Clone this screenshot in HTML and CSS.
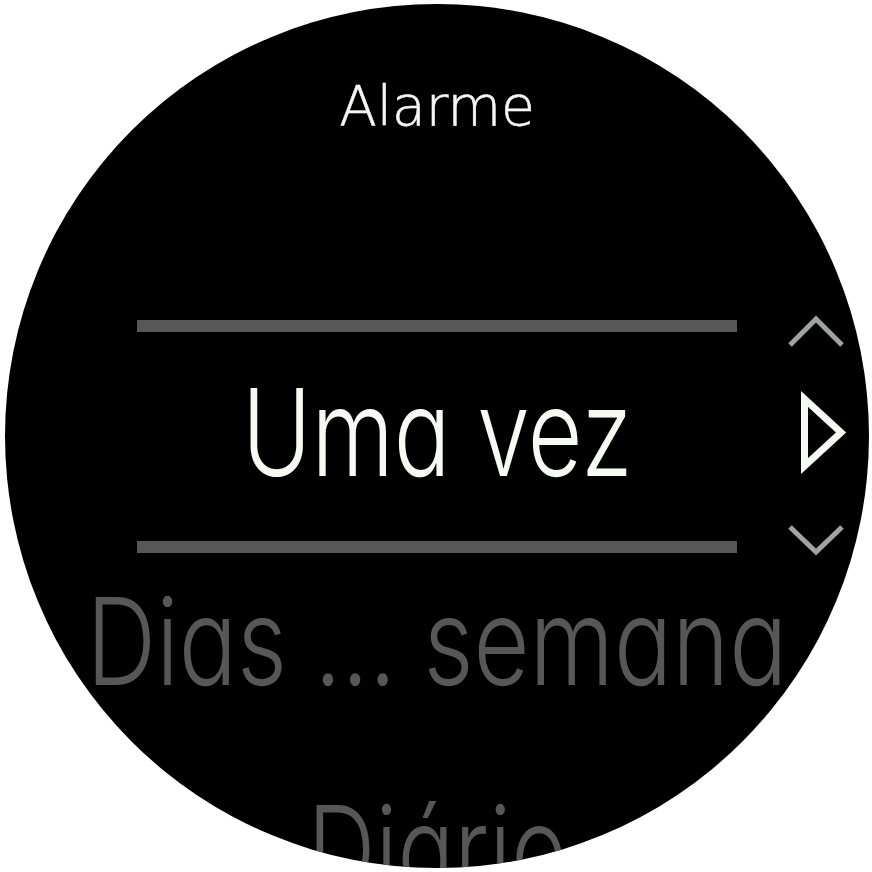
FILE: index.html
```html
<!DOCTYPE html>
<html lang="pt">
<head>
<meta charset="utf-8">
<title>Alarme</title>
<link rel="stylesheet" href="styles.css">
</head>
<body>
<div class="watch">
  <div class="title">Alarme</div>
  <div class="divider divider-top"></div>
  <div class="option option-selected">Uma vez</div>
  <div class="divider divider-bottom"></div>
  <div class="option option-next">Dias ... semana</div>
  <div class="option option-far">Diário</div>
  <svg class="side-nav" viewBox="785 310 70 260" width="70" height="260" aria-hidden="true">
    <polyline points="790,345 816,319 842,345" class="chev"/>
    <polygon points="804.5,399 804.5,466 841,432.5" class="play"/>
    <polyline points="790,527 816,552 842,527" class="chev"/>
  </svg>
</div>
</body>
</html>
```
FILE: styles.css
```css
html, body {
  margin: 0;
  padding: 0;
  background: #ffffff;
}
body {
  width: 872px;
  height: 872px;
  overflow: hidden;
}
.watch {
  position: relative;
  width: 864px;
  height: 864px;
  margin: 4px 0 0 5px;
  border-radius: 50%;
  background: #000000;
  overflow: hidden;
  box-sizing: border-box;
  padding-top: 75px;
  display: flex;
  flex-direction: column;
  align-items: center;
}
.title {
  flex: none;
  height: 55px;
  font-family: "DejaVu Sans", sans-serif;
  font-weight: 200;
  font-size: 55px;
  line-height: 55px;
  color: #f3f9f1;
  white-space: nowrap;
  -webkit-text-stroke: 0.6px #f3f9f1;
}
.divider {
  flex: none;
  width: 600px;
  height: 12px;
  background: #555855;
}
.divider-top { margin-top: 186px; }
.divider-bottom { margin-top: 48px; }
.option {
  flex: none;
  height: 121px;
  font-family: Inter, "Noto Sans", sans-serif;
  font-feature-settings: "cv11" 1;
  font-weight: 300;
  font-size: 121px;
  line-height: 121px;
  white-space: nowrap;
  color: #555855;
  transform: scaleX(0.78);
}
.option-selected {
  margin-top: 40px;
  color: #f5fbf3;
}
.option-next {
  margin-top: 28px;
  transform: scaleX(0.8);
}
.option-far { margin-top: 87px; }
.side-nav {
  position: absolute;
  left: 780px;
  top: 306px;
}
.chev {
  fill: none;
  stroke: #9ea59e;
  stroke-width: 5;
  stroke-linejoin: miter;
}
.play {
  fill: none;
  stroke: #f5fbf3;
  stroke-width: 7;
  stroke-linejoin: miter;
  stroke-miterlimit: 10;
}
```
